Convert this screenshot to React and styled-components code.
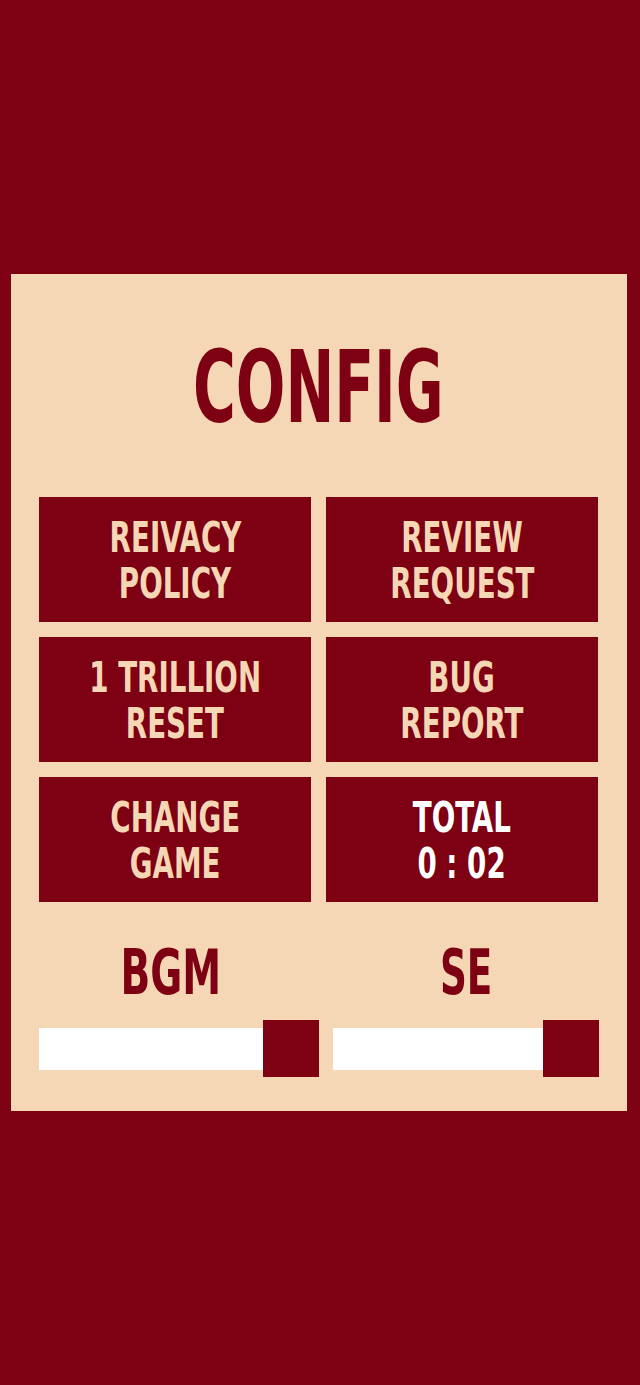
import React from 'react';
import styled, { createGlobalStyle } from 'styled-components';

const WINE = '#7d0013';
const CREAM = '#f5d7b5';

const GlobalStyle = createGlobalStyle`
    html, body {
        margin: 0;
        padding: 0;
        background-color: ${WINE};
    }
    * {
        box-sizing: border-box;
    }
`;

const Screen = styled.div`
    min-height: 1385px;
    padding: 274px 13px 0 11px;
    background-color: ${WINE};
    font-family: 'DejaVu Sans Condensed', 'DejaVu Sans', sans-serif;
    font-weight: 700;
`;

const Panel = styled.section`
    width: 616px;
    background-color: ${CREAM};
    padding: 0 29px 34px 28px;
    display: flex;
    flex-direction: column;
`;

const TitleBar = styled.h1`
    height: 223px;
    margin: 0;
    padding-top: 4px;
    display: flex;
    align-items: center;
    justify-content: center;
    color: ${WINE};
    font-size: 99px;
    font-weight: 700;
    line-height: 1;
`;

// Narrow the fallback face toward the condensed look of the original
const Squeeze = styled.span`
    display: inline-block;
    transform: scale(${(props) => props.$x || 0.78}, ${(props) => props.$y || 1});
    transform-origin: center;
    white-space: nowrap;
`;

const ButtonGrid = styled.div`
    display: grid;
    grid-template-columns: 272px 272px;
    grid-auto-rows: 125px;
    column-gap: 15px;
    row-gap: 15px;
`;

const MenuButton = styled.button`
    border: none;
    margin: 0;
    padding: 0;
    background-color: ${WINE};
    color: ${(props) => (props.$light ? '#ffffff' : CREAM)};
    font-family: inherit;
    font-size: 39.5px;
    font-weight: 700;
    line-height: 46px;
    display: flex;
    flex-direction: column;
    align-items: center;
    justify-content: center;
    cursor: pointer;
`;

const SoundRow = styled.div`
    display: grid;
    grid-template-columns: 280px 266px;
    column-gap: 14px;
`;

const SoundLabel = styled.div`
    margin-top: 40px;
    height: 62px;
    display: flex;
    align-items: center;
    justify-content: center;
    padding: ${(props) => (props.$side === 'left' ? '0 16px 0 0' : '0')};
    color: ${WINE};
    font-size: 62px;
    line-height: 1;
`;

const Slider = styled.div`
    margin-top: 16px;
    height: 57px;
    display: flex;
    align-items: center;
`;

const Track = styled.div`
    flex: 1;
    height: 42px;
    background-color: #ffffff;
`;

const Thumb = styled.div`
    width: 56px;
    height: 57px;
    background-color: ${WINE};
`;

const buttons = [
    { lines: ['REIVACY', 'POLICY'] },
    { lines: ['REVIEW', 'REQUEST'] },
    { lines: ['1 TRILLION', 'RESET'] },
    { lines: ['BUG', 'REPORT'] },
    { lines: ['CHANGE', 'GAME'] },
    { lines: ['TOTAL', '0 : 02'], light: true }
];

const App = () => (
    <>
        <GlobalStyle />
        <Screen>
            <Panel>
                <TitleBar>
                    <Squeeze $x={0.655}>CONFIG</Squeeze>
                </TitleBar>
                <ButtonGrid>
                    {buttons.map((b) => (
                        <MenuButton key={b.lines[0]} $light={b.light}>
                            {b.lines.map((line) => (
                                <Squeeze key={line} $x={0.78} $y={1.1}>
                                    {line}
                                </Squeeze>
                            ))}
                        </MenuButton>
                    ))}
                </ButtonGrid>
                <SoundRow>
                    <SoundLabel $side="left">
                        <Squeeze $x={0.7}>BGM</Squeeze>
                    </SoundLabel>
                    <SoundLabel $side="right">
                        <Squeeze $x={0.67}>SE</Squeeze>
                    </SoundLabel>
                    <Slider>
                        <Track />
                        <Thumb />
                    </Slider>
                    <Slider>
                        <Track />
                        <Thumb />
                    </Slider>
                </SoundRow>
            </Panel>
        </Screen>
    </>
);

export default App;
